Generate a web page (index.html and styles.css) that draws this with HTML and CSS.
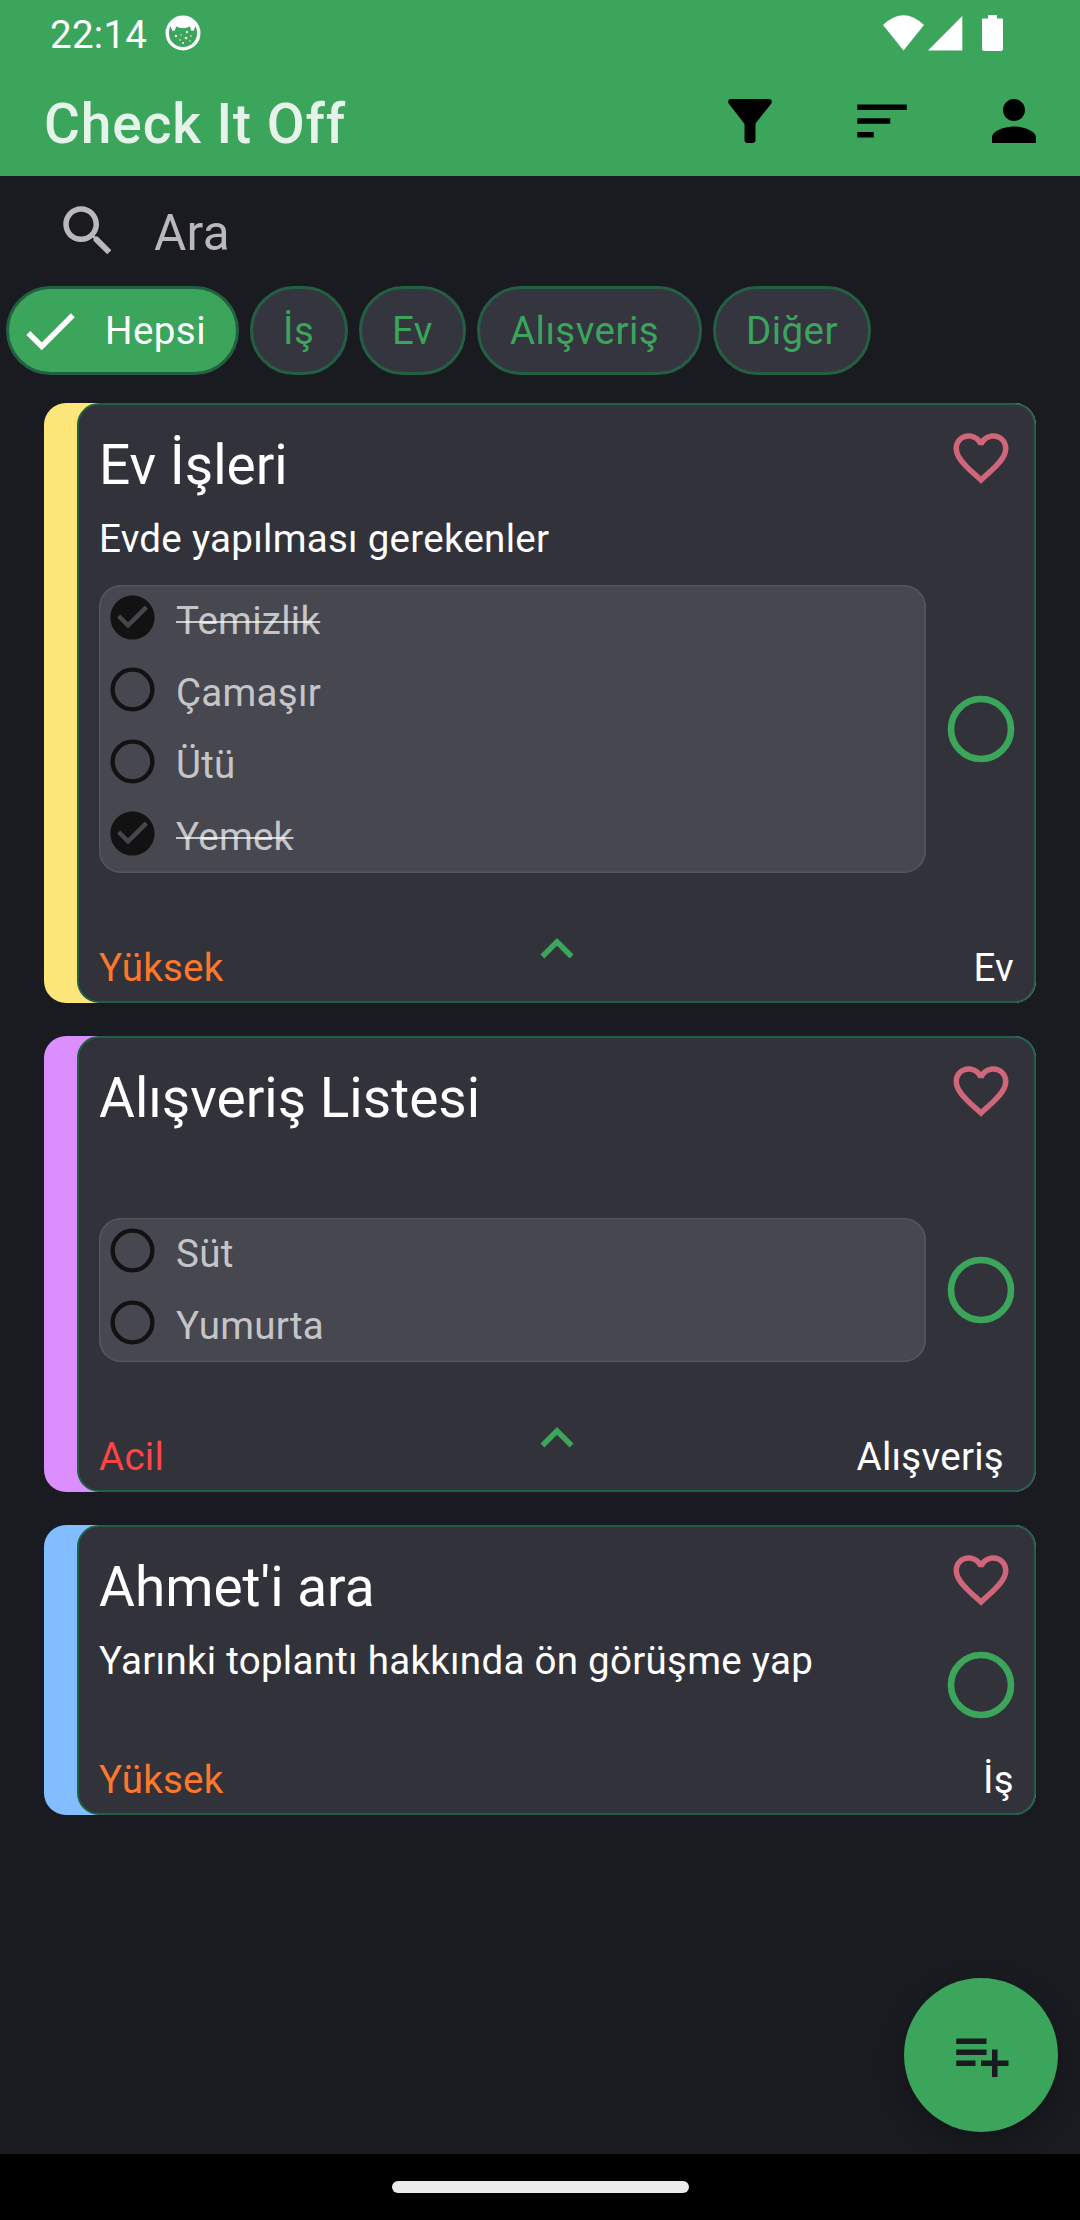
FILE: index.html
```html
<!DOCTYPE html>
<html lang="tr">
<head>
<meta charset="utf-8">
<title>Check It Off</title>
<link rel="stylesheet" href="styles.css">
</head>
<body>
<svg class="defs" width="0" height="0">
  <symbol id="heart" viewBox="0 0 24 24"><path d="M16.5 3c-1.74 0-3.41.81-4.5 2.09C10.91 3.81 9.24 3 7.5 3 4.42 3 2 5.42 2 8.5c0 3.78 3.4 6.86 8.55 11.54L12 21.35l1.45-1.32C18.6 15.36 22 12.28 22 8.5 22 5.42 19.58 3 16.5 3zm-4.4 15.55l-.1.1-.1-.1C7.14 14.24 4 11.39 4 8.5 4 6.5 5.5 5 7.5 5c1.54 0 3.04.99 3.57 2.36h1.87C13.46 5.99 14.96 5 16.5 5c2 0 3.5 1.5 3.5 3.5 0 2.89-3.14 5.74-7.9 10.05z"/></symbol>
  <symbol id="ring" viewBox="0 0 24 24"><circle cx="12" cy="12" r="9" fill="none" stroke="currentColor" stroke-width="2"/></symbol>
  <symbol id="done" viewBox="0 0 24 24"><path d="M12 2C6.48 2 2 6.48 2 12s4.48 10 10 10 10-4.48 10-10S17.52 2 12 2zm-2 15l-5-5 1.41-1.41L10 14.17l7.59-7.59L19 8l-9 9z"/></symbol>
  <symbol id="less" viewBox="0 0 24 24"><path d="M12 8l-6 6 1.41 1.41L12 10.83l4.59 4.58L18 14z"/></symbol>
</svg>
<div class="screen">
  <header class="header">
    <div class="status">
      <span class="time">22:14</span>
      <svg class="badge" viewBox="0 0 36 36"><circle cx="18" cy="18" r="15.8" fill="none" stroke="#fff" stroke-width="3.4"/><path d="M5 10C9 0 27 0 31 10L28.500 16 26 15.500 25 11.500Q18 15 11 11.500L10 15.500 7.500 16z" fill="#fff"/><g fill="#fff"><circle cx="11" cy="21" r="1.200"/><circle cx="22" cy="17" r="1.200"/><circle cx="21" cy="23" r="1.300"/><circle cx="26" cy="21" r=".8"/><circle cx="16" cy="20" r=".7"/><circle cx="15" cy="25" r=".8"/><circle cx="18" cy="28" r=".9"/><circle cx="25" cy="26" r=".7"/></g></svg>
      <svg class="system" viewBox="0 0 121 37" fill="#fff"><path d="M0 10Q20.500-9.500 41 10L20.500 35.500z"/><path d="M45 35.500L79.300 1V35.500z"/><path d="M99 4.500q0-1 1-1h5V0h9v3.500h5q1 0 1 1V34q0 2-2 2h-17q-2 0-2-2z"/></svg>
    </div>
    <div class="toolbar">
      <h1 class="app-title">Check It Off</h1>
      <svg class="icon" viewBox="0 0 24 24"><path d="M4.250 5.610C6.270 8.200 10 13 10 13v6c0 .55.45 1 1 1h2c.55 0 1-.45 1-1v-6s3.720-4.800 5.740-7.390c.51-.66.04-1.610-.79-1.610H5.040c-.83 0-1.300.95-.79 1.610z"/></svg>
      <svg class="icon" viewBox="0 0 24 24"><path d="M3 18h6v-2H3v2zM3 6v2h18V6H3zm0 7h12v-2H3v2z"/></svg>
      <svg class="icon" viewBox="0 0 24 24"><path d="M12 12c2.210 0 4-1.790 4-4s-1.790-4-4-4-4 1.790-4 4 1.790 4 4 4zm0 2c-2.670 0-8 1.340-8 4v2h16v-2c0-2.660-5.330-4-8-4z"/></svg>
    </div>
  </header>

  <div class="search">
    <svg class="icon" viewBox="0 0 24 24"><path d="M15.500 14h-.79l-.28-.27C15.410 12.590 16 11.110 16 9.500 16 5.910 13.090 3 9.500 3S3 5.910 3 9.500 5.910 16 9.500 16c1.610 0 3.090-.59 4.230-1.570l.27.28v.79l5 4.990L20.490 19l-4.990-5zm-6 0C7.010 14 5 11.990 5 9.500S7.010 5 9.500 5 14 7.010 14 9.500 11.990 14 9.500 14z"/></svg>
    <span>Ara</span>
  </div>

  <nav class="chips">
    <div class="chip chip-on"><svg class="icon" viewBox="0 0 24 24"><path d="M9 16.170L4.830 12l-1.420 1.410L9 19 21 7l-1.410-1.410z"/></svg><span>Hepsi</span></div>
    <div class="chip chip-work">İş</div>
    <div class="chip chip-home">Ev</div>
    <div class="chip chip-shop">Alışveriş</div>
    <div class="chip chip-other">Diğer</div>
  </nav>

  <main class="list">
    <article class="card yellow"><div class="panel">
      <div class="head"><h2>Ev İşleri</h2><svg class="heart"><use href="#heart"/></svg></div>
      <p class="desc">Evde yapılması gerekenler</p>
      <div class="middle">
        <ul class="tasks">
          <li class="checked"><svg><use href="#done"/></svg><span>Temizlik</span></li>
          <li><svg><use href="#ring"/></svg><span>Çamaşır</span></li>
          <li><svg><use href="#ring"/></svg><span>Ütü</span></li>
          <li class="checked"><svg><use href="#done"/></svg><span>Yemek</span></li>
        </ul>
        <svg class="ring"><use href="#ring"/></svg>
      </div>
      <div class="foot"><span class="high">Yüksek</span><svg class="icon"><use href="#less"/></svg><span class="cat">Ev</span></div>
    </div></article>

    <article class="card purple"><div class="panel">
      <div class="head"><h2>Alışveriş Listesi</h2><svg class="heart"><use href="#heart"/></svg></div>
      <p class="desc"></p>
      <div class="middle">
        <ul class="tasks">
          <li><svg><use href="#ring"/></svg><span>Süt</span></li>
          <li><svg><use href="#ring"/></svg><span>Yumurta</span></li>
        </ul>
        <svg class="ring"><use href="#ring"/></svg>
      </div>
      <div class="foot"><span class="urgent">Acil</span><svg class="icon"><use href="#less"/></svg><span class="cat cat-shop">Alışveriş</span></div>
    </div></article>

    <article class="card blue short"><div class="panel">
      <div class="head"><h2>Ahmet'i ara</h2><svg class="heart"><use href="#heart"/></svg></div>
      <div class="middle"><p class="desc">Yarınki toplantı hakkında ön görüşme yap</p><svg class="ring"><use href="#ring"/></svg></div>
      <div class="foot"><span class="high">Yüksek</span><span></span><span class="cat">İş</span></div>
    </div></article>
  </main>

  <button class="fab"><svg class="icon" viewBox="0 0 24 24"><path d="M14 10H3v2h11v-2zm0-4H3v2h11V6zm4 8v-4h-2v4h-4v2h4v4h2v-4h4v-2h-4zM3 16h7v-2H3v2z"/></svg></button>
  <footer class="navbar"><div class="pill"></div></footer>
</div>
</body>
</html>
```
FILE: styles.css
```css
* { box-sizing: border-box; }
body { margin: 0; background: #1a1b20; }
h1, h2, p, ul { margin: 0; padding: 0; font-weight: 400; }
svg { display: block; flex: none; fill: currentColor; }
.defs { position: absolute; }
.icon { width: 66px; height: 66px; }

.screen {
  position: relative;
  display: flex;
  flex-direction: column;
  width: 1080px;
  height: 2220px;
  overflow: hidden;
  font-family: Roboto, "Liberation Sans", sans-serif;
  font-size: 38.5px;
  line-height: 46px;
  letter-spacing: 0.28px;
  color: #fff;
}

.header { height: 176px; background: #3aa55b; }
.status { display: flex; height: 66px; padding: 15px 76px 0 50px; }
.time { line-height: 39px; }
.badge { width: 36px; height: 36px; margin-left: 18px; }
.system { width: 121px; height: 37px; margin-left: auto; }
.toolbar { display: flex; gap: 66px; padding: 22px 33px 0 44px; color: #000; }
.app-title {
  margin-right: auto;
  font-size: 55px;
  font-weight: 500;
  line-height: 73px;
  letter-spacing: 0.9px;
  color: #e6f3ea;
}

.search {
  display: flex;
  gap: 33px;
  height: 110px;
  padding: 22px 55px;
  font-size: 49.5px;
  line-height: 71px;
  color: #b9b9bb;
}

.chips { display: flex; gap: 11px; height: 117px; padding-left: 6px; }
.chip {
  display: flex;
  height: 89px;
  padding-left: 30px;
  border: 3px solid #235f43;
  border-radius: 45px;
  background: #35353f;
  line-height: 83px;
  letter-spacing: 0.45px;
  color: #3aa55b;
}
.chip-on { gap: 22px; width: 233px; padding: 0 0 0 8px; background: #3aa55b; color: #fff; }
.chip-on .icon { margin-top: 9px; }
.chip-work { width: 98px; }
.chip-home { width: 107px; }
.chip-shop { width: 225px; }
.chip-other { width: 158px; }

.list { display: flex; flex-direction: column; gap: 33px; padding: 0 44px; flex: 1; }
.card { padding-left: 33px; border-radius: 22px; }
.yellow { background: #fee77a; }
.purple { background: #dc8eff; }
.blue { background: #82bdff; }
.panel {
  padding: 20px 20px 18px;
  border: 2px solid #216143;
  border-radius: 22px;
  background: #32323b;
}
.head { display: flex; justify-content: space-between; height: 84px; }
.head h2 { font-size: 55px; line-height: 80px; letter-spacing: 0; }
.heart { width: 66px; height: 66px; color: #cf6679; }
.desc { height: 76px; line-height: 59px; }
.middle { display: flex; justify-content: space-between; align-items: center; }
.tasks {
  width: 827px;
  border-radius: 22px;
  background: #47474f;
  box-shadow: inset 0 0 0 1.5px #55555d;
  color: rgba(255, 255, 255, 0.7);
  list-style: none;
}
.tasks li { display: flex; gap: 17.5px; height: 72px; padding: 6px 6.5px 0; }
.tasks li svg { width: 53px; height: 53px; color: #121212; }
.tasks li span { line-height: 59px; }
.checked span { text-decoration: line-through; text-decoration-thickness: 2px; }
.ring { width: 80px; height: 80px; margin-right: -7px; color: #3aa55b; }
.foot {
  display: grid;
  grid-template-columns: 1fr 66px 1fr;
  align-items: end;
  height: 110px;
}
.foot span { margin-bottom: -8px; }
.foot .cat { text-align: right; }
.foot .cat-shop { padding-right: 10px; }
.foot .icon { margin-bottom: 1px; color: #3aa55b; }
.high { color: #ff772b; }
.urgent { color: #ff4545; }
.short .panel { height: 290px; }
.short .middle { height: 113px; align-items: flex-start; }
.short .ring { margin-top: 14px; }
.short .foot { height: 51px; }

.fab {
  position: absolute;
  left: 904px;
  top: 1978px;
  display: grid;
  place-items: center;
  width: 154px;
  height: 154px;
  padding: 0;
  border: 0;
  border-radius: 50%;
  background: #3aa55b;
  color: #1a1b20;
  box-shadow: 0 10px 26px rgba(0, 0, 0, 0.25);
}
.navbar { position: relative; display: flex; justify-content: center; height: 66px; padding-top: 27px; background: #000; }
.pill { width: 297px; height: 12px; border-radius: 6px; background: #ebebeb; }
```
